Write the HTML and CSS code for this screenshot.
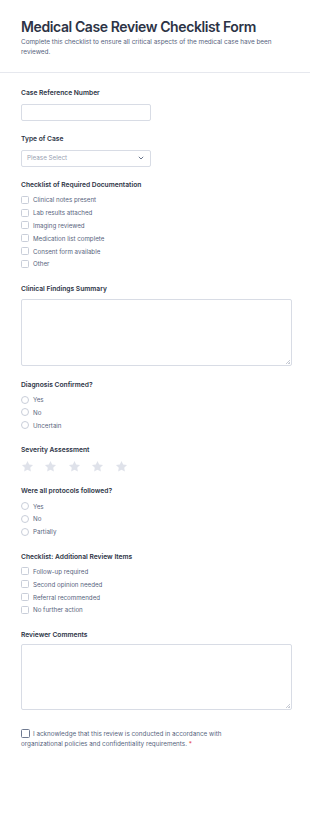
FILE: index.html
```html
<!DOCTYPE html>
<html lang="en">
<head>
<meta charset="utf-8">
<title>Medical Case Review Checklist Form</title>
<link rel="stylesheet" href="styles.css">
</head>
<body>
<div class="page">
  <header class="header">
    <h1 class="title">Medical Case Review Checklist Form</h1>
    <p class="subtitle">Complete this checklist to ensure all critical aspects of the medical case have been reviewed.</p>
  </header>
  <form class="form">
    <div class="field">
      <label class="label">Case Reference Number</label>
      <input class="input" type="text">
    </div>
    <div class="field">
      <label class="label">Type of Case</label>
      <div class="select">
        <span class="placeholder">Please Select</span>
        <svg class="chev" width="6" height="4" viewBox="0 0 6 4"><path d="M0.8 0.8 L3 3 L5.2 0.8" fill="none" stroke="#57647e" stroke-width="0.9"/></svg>
      </div>
    </div>
    <div class="field">
      <label class="label">Checklist of Required Documentation</label>
      <ul class="options">
        <li class="option"><span class="box"></span>Clinical notes present</li>
        <li class="option"><span class="box"></span>Lab results attached</li>
        <li class="option"><span class="box"></span>Imaging reviewed</li>
        <li class="option"><span class="box"></span>Medication list complete</li>
        <li class="option"><span class="box"></span>Consent form available</li>
        <li class="option"><span class="box"></span>Other</li>
      </ul>
    </div>
    <div class="field">
      <label class="label">Clinical Findings Summary</label>
      <div class="textarea"><span class="grip"></span></div>
    </div>
    <div class="field">
      <label class="label">Diagnosis Confirmed?</label>
      <ul class="options">
        <li class="option"><span class="radio"></span>Yes</li>
        <li class="option"><span class="radio"></span>No</li>
        <li class="option"><span class="radio"></span>Uncertain</li>
      </ul>
    </div>
    <div class="field">
      <label class="label">Severity Assessment</label>
      <div class="stars">
        <svg class="star" viewBox="0 0 24 24"><path d="M12 1.8 L15.1 8.3 L22.2 9.2 L17 14.1 L18.3 21.2 L12 17.8 L5.7 21.2 L7 14.1 L1.8 9.2 L8.9 8.3 Z"/></svg>
        <svg class="star" viewBox="0 0 24 24"><path d="M12 1.8 L15.1 8.3 L22.2 9.2 L17 14.1 L18.3 21.2 L12 17.8 L5.7 21.2 L7 14.1 L1.8 9.2 L8.9 8.3 Z"/></svg>
        <svg class="star" viewBox="0 0 24 24"><path d="M12 1.8 L15.1 8.3 L22.2 9.2 L17 14.1 L18.3 21.2 L12 17.8 L5.7 21.2 L7 14.1 L1.8 9.2 L8.9 8.3 Z"/></svg>
        <svg class="star" viewBox="0 0 24 24"><path d="M12 1.8 L15.1 8.3 L22.2 9.2 L17 14.1 L18.3 21.2 L12 17.8 L5.7 21.2 L7 14.1 L1.8 9.2 L8.9 8.3 Z"/></svg>
        <svg class="star" viewBox="0 0 24 24"><path d="M12 1.8 L15.1 8.3 L22.2 9.2 L17 14.1 L18.3 21.2 L12 17.8 L5.7 21.2 L7 14.1 L1.8 9.2 L8.9 8.3 Z"/></svg>
      </div>
    </div>
    <div class="field">
      <label class="label">Were all protocols followed?</label>
      <ul class="options">
        <li class="option"><span class="radio"></span>Yes</li>
        <li class="option"><span class="radio"></span>No</li>
        <li class="option"><span class="radio"></span>Partially</li>
      </ul>
    </div>
    <div class="field">
      <label class="label">Checklist: Additional Review Items</label>
      <ul class="options">
        <li class="option"><span class="box"></span>Follow-up required</li>
        <li class="option"><span class="box"></span>Second opinion needed</li>
        <li class="option"><span class="box"></span>Referral recommended</li>
        <li class="option"><span class="box"></span>No further action</li>
      </ul>
    </div>
    <div class="field">
      <label class="label">Reviewer Comments</label>
      <div class="textarea short"><span class="grip"></span></div>
    </div>
    <div class="field ack">
      <p class="ack-text"><span class="ack-box"></span>I acknowledge that this review is conducted in accordance with organizational policies and confidentiality requirements.&nbsp;<span class="req">*</span></p>
    </div>
  </form>
</div>
</body>
</html>
```
FILE: styles.css
```css
* { box-sizing: border-box; }
html, body { margin: 0; padding: 0; background: #ffffff; }
body {
  font-family: Inter, "Noto Sans", sans-serif;
  color: #2c3345;
}
.page { width: 310px; }
.header {
  padding: 18px 21px 0 21px;
  height: 73px;
  border-bottom: 1px solid #e6e8ee;
}
.title {
  margin: 0;
  font-size: 14px;
  line-height: 17px;
  font-weight: 600;
  letter-spacing: -0.4px;
  color: #2c3345;
}
.subtitle {
  margin: 2px 0 0 0;
  font-size: 6.4px;
  line-height: 10px;
  color: #57647e;
}
.form {
  padding: 16px 18px 0 21px;
  display: flex;
  flex-direction: column;
  gap: 14.5px;
}
.field { display: flex; flex-direction: column; }
.label {
  font-size: 6.7px;
  line-height: 9px;
  font-weight: 600;
  color: #2c3345;
  margin-bottom: 5.5px;
}
.input, .select {
  width: 130px;
  height: 17px;
  border: 1px solid #d8dce5;
  border-radius: 2px;
  background: #fff;
  margin: 0;
  padding: 0;
}
.select {
  display: flex;
  align-items: center;
  justify-content: space-between;
  padding: 0 6px 0 5px;
}
.placeholder { font-size: 6.3px; color: #9aa2b3; }
.options {
  list-style: none;
  margin: -2px 0 0 0;
  padding: 0;
  display: flex;
  flex-direction: column;
}
.option {
  display: flex;
  align-items: center;
  height: 12.8px;
  font-size: 6.2px;
  color: #57647e;
}
.box {
  width: 8px;
  height: 8px;
  border: 1px solid #c9ced9;
  border-radius: 1.5px;
  margin-right: 4px;
  flex: none;
}
.radio {
  width: 8px;
  height: 8px;
  border: 1px solid #c9ced9;
  border-radius: 50%;
  margin-right: 4px;
  flex: none;
}
.textarea {
  position: relative;
  width: 271px;
  height: 67px;
  border: 1px solid #d8dce5;
  border-radius: 2px;
  background: #fff;
}
.textarea.short { height: 66px; margin-top: -1px; }
.grip {
  position: absolute;
  right: 1px;
  bottom: 1px;
  width: 4px;
  height: 4px;
  background: linear-gradient(135deg, transparent 45%, #c8ccd5 45%, #c8ccd5 58%, transparent 58%, transparent 75%, #c8ccd5 75%, #c8ccd5 88%, transparent 88%);
}
.stars {
  display: flex;
  gap: 10.5px;
  margin-left: -0.5px;
  margin-top: -1px;
}
.star { width: 13px; height: 13px; fill: #dfe2ea; }
.ack { margin-top: 4px; }
.ack-text {
  margin: 0;
  max-width: 232px;
  font-size: 6.3px;
  line-height: 10px;
  color: #57647e;
}
.ack-box {
  display: inline-block;
  width: 9px;
  height: 9px;
  border: 1px solid #6f7a91;
  border-radius: 1.5px;
  vertical-align: -2px;
  margin-right: 3px;
}
.req { color: #e23b3b; }
```
